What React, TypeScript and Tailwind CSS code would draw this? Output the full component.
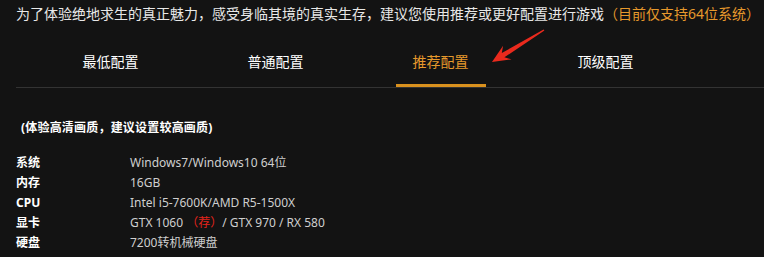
import React from 'react'

const tabs = ['最低配置', '普通配置', '推荐配置', '顶级配置']

const specs: { label: string; value: React.ReactNode }[] = [
    { label: '系统', value: 'Windows7/Windows10 64位' },
    { label: '内存', value: '16GB' },
    { label: 'CPU', value: 'Intel i5-7600K/AMD R5-1500X' },
    {
        label: '显卡',
        value: (
            <>
                GTX 1060 <span className="text-[#e3241b]">（荐）</span>/ GTX 970 / RX 580
            </>
        ),
    },
    { label: '硬盘', value: '7200转机械硬盘' },
]

function Arrow() {
    return (
        <svg className="absolute left-[488px] top-[26px]" width="60" height="40" viewBox="0 0 60 40">
            <polygon
                points="4,36 23.5,33.4 16.4,31.3 56.4,4.6 55.6,3.4 13.8,27.1 15.1,19.8"
                fill="#ea2a1d"
            />
        </svg>
    )
}

export default function App() {
    const active = 2

    return (
        <div
            className="relative w-[764px] h-[257px] overflow-hidden bg-[#131313] text-[#e8e8e8]"
            style={{ fontFamily: '"Noto Sans", "Noto Sans CJK SC", sans-serif' }}>
            <p className="pl-[16px] pt-[4px] text-[14px] leading-[20px] whitespace-nowrap">
                为了体验绝地求生的真正魅力，感受身临其境的真实生存，建议您使用推荐或更好配置进行游戏
                <span className="text-[#e6992c]">（目前仅支持64位系统）</span>
            </p>

            <div className="ml-[16px] flex pl-[12px] border-b border-[#333333]">
                {tabs.map((tab, index) => (
                    <div key={index} className="w-[165px] flex flex-col items-center pt-[28px]">
                        <span
                            className={
                                'text-[14px] leading-[20px] ' +
                                (index === active ? 'text-[#e6992c]' : 'text-white')
                            }>
                            {tab}
                        </span>
                        <div
                            className={
                                'mt-[12px] w-[90px] h-[3px] ' +
                                (index === active ? 'bg-[#d9911e]' : 'bg-transparent')
                            }
                        />
                    </div>
                ))}
            </div>

            <Arrow />

            <p className="mt-[30px] pl-[21px] text-[12px] leading-[20px] font-bold tracking-[0.2px] text-white">
                (体验高清画质，建议设置较高画质)
            </p>

            <div className="mt-[15px] pl-[16px] text-[12px] leading-[20px]">
                {specs.map((spec, index) => (
                    <div key={index} className="flex">
                        <span className="w-[114px] font-bold text-white">{spec.label}</span>
                        <span className="text-[#cfcfcf] whitespace-nowrap">{spec.value}</span>
                    </div>
                ))}
            </div>
        </div>
    )
}
